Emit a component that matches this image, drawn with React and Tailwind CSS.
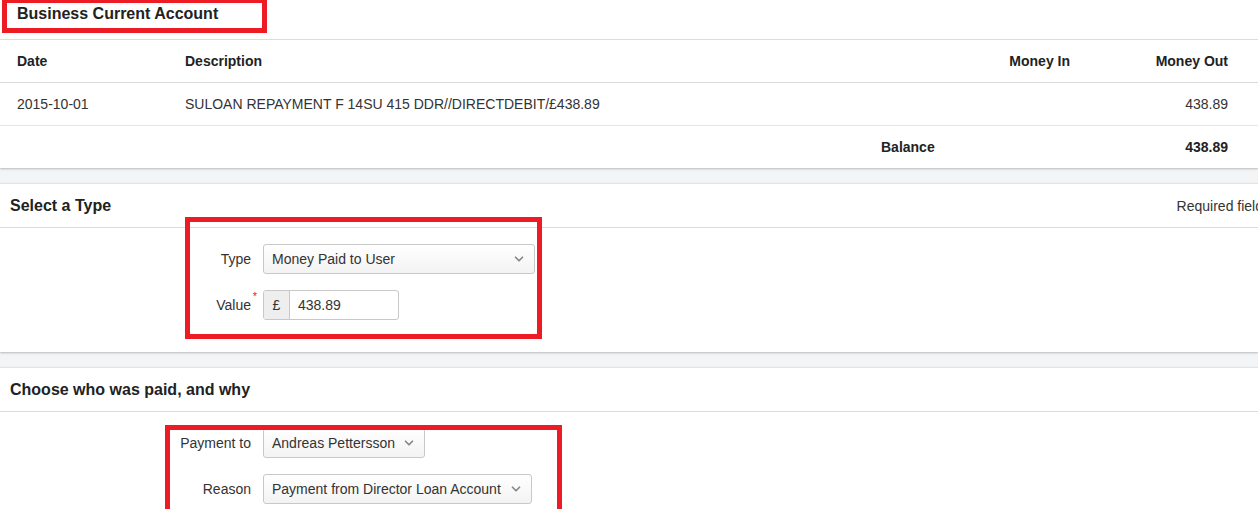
import { ChevronDown } from "lucide-react";

const Select = ({ value, width }) => (
  <div
    className={`flex h-[30px] items-center justify-between rounded-[3px] border border-[#c8c8c8] bg-gradient-to-b from-white to-[#f3f3f3] pl-[8px] pr-[8px] text-sm text-[#333] ${width}`}
  >
    <span>{value}</span>
    <ChevronDown size={14} strokeWidth={3} className="text-[#888]" />
  </div>
);

const FormRow = ({ label, required, children }) => (
  <div className="flex h-[30px] items-center">
    <div className="w-[251px] text-right text-sm text-[#333]">
      <span className="relative">
        {label}
        {required && (
          <span className="absolute -top-[8px] -right-[6px] text-[11px] text-[#d9232d]">*</span>
        )}
      </span>
    </div>
    <div className="ml-[12px]">{children}</div>
  </div>
);

const Panel = ({ title, right, children }) => (
  <section className="mt-[15px] border-t border-[#e4e4e4] bg-white shadow-[0_1px_2px_rgba(0,0,0,0.25)]">
    <div className="flex h-[44px] items-center justify-between border-b border-[#dcdcdc] pl-[10px]">
      <h2 className="text-base font-bold text-[#222]">{title}</h2>
      {right}
    </div>
    {children}
  </section>
);

export default function App() {
  return (
    <div className="relative h-[509px] overflow-hidden bg-[#f3f4f6] font-['Liberation_Sans',Arial,sans-serif] text-[#333]">
      {/* account table */}
      <section className="bg-white shadow-[0_1px_2px_rgba(0,0,0,0.25)]">
        <div className="h-[40px] border-b border-[#dcdcdc] pl-[17px] pt-[5px] text-base font-bold leading-[18px] text-[#222]">
          Business Current Account
        </div>

        <div className="flex h-[43px] items-center border-b border-[#dcdcdc] pl-[17px] pr-[30px] text-sm font-bold text-[#222]">
          <div className="w-[168px]">Date</div>
          <div className="flex-1">Description</div>
          <div className="w-[150px] text-right">Money In</div>
          <div className="w-[158px] text-right">Money Out</div>
        </div>

        <div className="flex h-[43px] items-center border-b border-[#e6e6e6] pl-[17px] pr-[30px] text-sm">
          <div className="w-[168px]">2015-10-01</div>
          <div className="flex-1">SULOAN REPAYMENT F 14SU 415 DDR//DIRECTDEBIT/£438.89</div>
          <div className="w-[150px] text-right"></div>
          <div className="w-[158px] text-right">438.89</div>
        </div>

        <div className="flex h-[42px] items-center justify-end pr-[30px] text-sm font-bold text-[#222]">
          <div className="flex w-[347px] justify-between">
            <span>Balance</span>
            <span>438.89</span>
          </div>
        </div>
      </section>

      <Panel
        title="Select a Type"
        right={<span className="mr-[-12px] whitespace-nowrap text-sm text-[#333]">Required fields</span>}
      >
        <div className="flex h-[124px] flex-col gap-[16px] pt-[16px]">
          <FormRow label="Type">
            <Select value="Money Paid to User" width="w-[272px]" />
          </FormRow>
          <FormRow label="Value" required>
            <div className="flex h-[30px] w-[136px] overflow-hidden rounded-[3px] border border-[#c8c8c8] text-sm">
              <span className="flex w-[26px] items-center justify-center border-r border-[#c8c8c8] bg-[#eeeeee]">£</span>
              <span className="flex items-center pl-[8px]">438.89</span>
            </div>
          </FormRow>
        </div>
      </Panel>

      <Panel title="Choose who was paid, and why">
        <div className="flex flex-col gap-[16px] pt-[16px] pb-[20px]">
          <FormRow label="Payment to">
            <Select value="Andreas Pettersson" width="w-[162px]" />
          </FormRow>
          <FormRow label="Reason">
            <Select value="Payment from Director Loan Account" width="w-[269px]" />
          </FormRow>
        </div>
      </Panel>

      {/* annotation boxes */}
      <div className="pointer-events-none absolute left-[2px] top-[-2px] h-[35px] w-[265px] border-[5px] border-[#ed1c24]" />
      <div className="pointer-events-none absolute left-[185px] top-[217px] h-[122px] w-[357px] border-[5px] border-[#ed1c24]" />
      <div className="pointer-events-none absolute left-[165px] top-[425px] h-[120px] w-[397px] border-[5px] border-[#ed1c24]" />
    </div>
  );
}
